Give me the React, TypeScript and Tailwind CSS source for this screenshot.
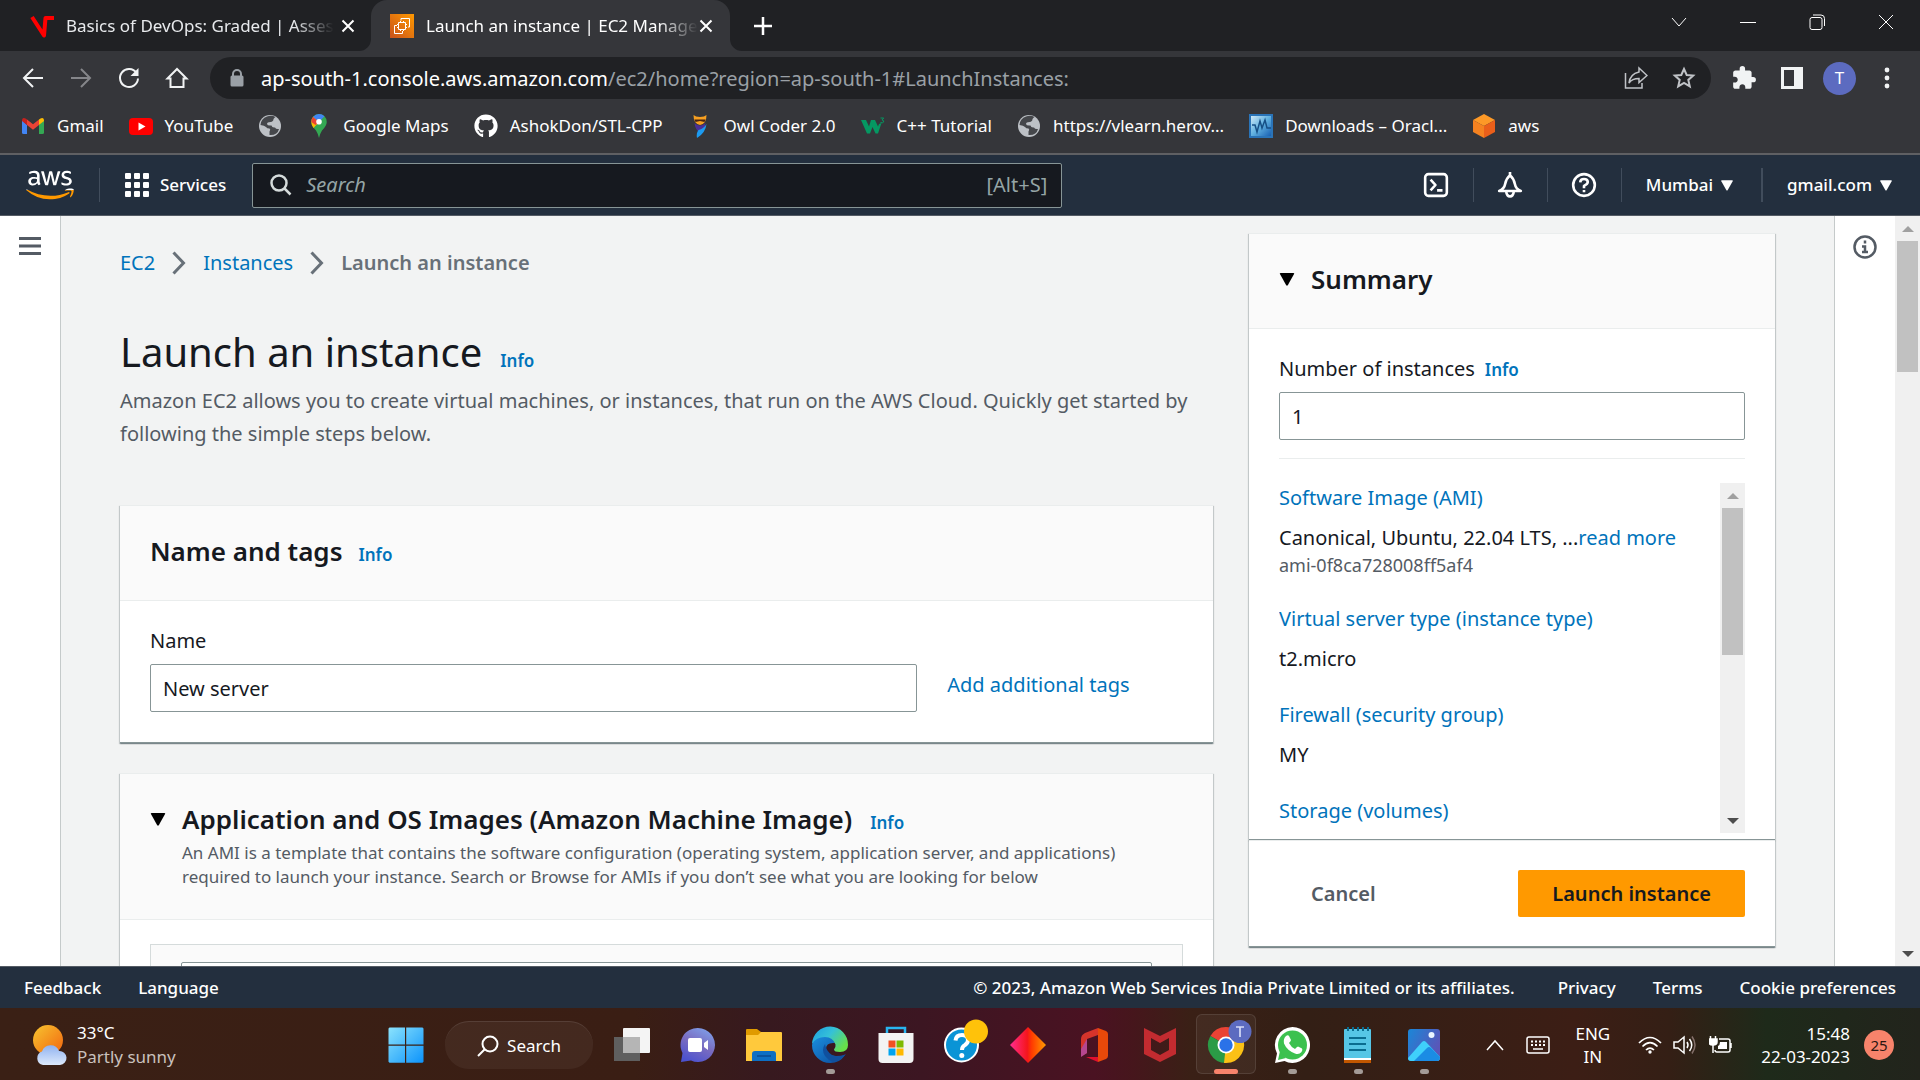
import React from "react";
import type { ReactNode } from "react";
import { FaAws, FaGithub } from "react-icons/fa";
import { MdExtension } from "react-icons/md";

/* ---------- small shared pieces ---------- */

function Info() {
  return (
    <a href="#info" className="text-[17px] leading-6 font-semibold text-[#0073bb]">
      Info
    </a>
  );
}

function Caret({ className }: { className: string }) {
  return (
    <svg viewBox="0 0 16 14" className={className} fill="currentColor" aria-hidden="true">
      <path d="M1 0h14q1.200 0 .6 1.200L9 13q-1 1.500-2 0L.4 1.200Q-.2 0 1 0z" />
    </svg>
  );
}

function CloseX() {
  return (
    <svg viewBox="0 0 14 14" className="size-[14px]" stroke="#fff" strokeWidth="2" aria-hidden="true">
      <path d="M1.500 1.500l11 11M12.500 1.500l-11 11" />
    </svg>
  );
}

function ScrollArrow({ up = false }: { up?: boolean }) {
  return (
    <svg viewBox="0 0 12 6" className={up ? "h-[6px] w-3 text-[#a0a0a0]" : "h-[6px] w-3 text-[#4d4d4d]"} fill="currentColor" aria-hidden="true">
      <path d={up ? "M0 6L6 0l6 6z" : "M0 0l6 6 6-6z"} />
    </svg>
  );
}

function Scrollbar({ thumb }: { thumb: string }) {
  return (
    <div className="flex w-[25px] shrink-0 flex-col items-center bg-[#f0f0f0]">
      <div className="flex h-[25px] items-center">
        <ScrollArrow up />
      </div>
      <div className={thumb} />
      <div className="mt-auto flex h-[25px] items-center">
        <ScrollArrow />
      </div>
    </div>
  );
}

/* ---------- browser chrome ---------- */

function Tab({ icon, title, active = false }: { icon: ReactNode; title: string; active?: boolean }) {
  return (
    <div
      className={
        active
          ? "relative flex w-[359px] items-center rounded-t-2xl bg-[#35363a] pr-[17px] pl-[19px] text-white"
          : "flex w-[371px] items-center pr-4 pl-[30px] text-[#e8eaed]"
      }
    >
      {active && (
        <>
          <svg viewBox="0 0 12 12" className="absolute bottom-0 -left-3 size-3" fill="#35363a" aria-hidden="true">
            <path d="M12 0v12H0A12 12 0 0 0 12 0z" />
          </svg>
          <svg viewBox="0 0 12 12" className="absolute -right-3 bottom-0 size-3" fill="#35363a" aria-hidden="true">
            <path d="M0 0v12h12A12 12 0 0 1 0 0z" />
          </svg>
        </>
      )}
      {icon}
      <span className="ml-3 mask-r-from-85% text-[17px] leading-6 whitespace-nowrap">{title}</span>
      <button aria-label="Close tab" className="ml-auto">
        <CloseX />
      </button>
    </div>
  );
}

function TabStrip() {
  return (
    <div className="flex h-[51px] bg-[#202124]">
      <Tab
        title="Basics of DevOps: Graded | Asses"
        icon={
          <svg viewBox="0 0 24 24" className="size-6 shrink-0" fill="none" stroke="#f00" strokeWidth="4" aria-hidden="true">
            <path d="M2 3l12 18.500L15.500 4H24" strokeLinejoin="round" />
          </svg>
        }
      />
      <Tab
        active
        title="Launch an instance | EC2 Manage"
        icon={
          <svg viewBox="0 0 24 24" className="size-6 shrink-0" aria-hidden="true">
            <defs>
              <linearGradient id="ec2" x1="0" y1="1" x2="1" y2="0">
                <stop offset="0" stopColor="#c8511b" />
                <stop offset="1" stopColor="#f90" />
              </linearGradient>
            </defs>
            <path fill="url(#ec2)" d="M0 0h24v24H0z" />
            <g fill="none" stroke="#fff" strokeWidth="1">
              <path d="M7 11.500H4.500v8h8V17M11 6.500v-2h8.500v8.500H18" />
              <path d="M8.500 8.500h7v7h-7zM10.500 7v1.500m3-1.500v1.500m-3 7V17m3-1.500V17M7 10.500h1.500M7 13.500h1.500m7-3H17m-1.500 3H17" />
            </g>
          </svg>
        }
      />
      <button aria-label="New tab" className="ml-6">
        <svg viewBox="0 0 18 18" className="size-[18px]" stroke="#fff" strokeWidth="2.500" aria-hidden="true">
          <path d="M9 0v18M0 9h18" />
        </svg>
      </button>
      <div className="ml-auto flex h-[43px]">
        {[
          ["Search tabs", "M1 4l7 8 7-8"],
          ["Minimise", "M0 8.500h16"],
          ["Restore", "M3 3.500h8q2 0 2 2v8q0 2-2 2H3q-2 0-2-2v-8q0-2 2-2zM4 1h8q3.500 0 3.500 3.500V12"],
          ["Close", "M1 1l14 14M15 1L1 15"],
        ].map(([label, d]) => (
          <button key={label} aria-label={label} className="flex w-[69px] items-center justify-center">
            <svg viewBox="0 0 16 16" className="size-4" fill="none" stroke="#fff" strokeWidth="1" aria-hidden="true">
              <path d={d} />
            </svg>
          </button>
        ))}
      </div>
    </div>
  );
}

function NavButton({ label, children }: { label: string; children: ReactNode }) {
  return (
    <button aria-label={label} className="flex w-12 shrink-0 justify-center">
      <svg viewBox="0 0 24 24" className="size-6" fill="none" stroke="#f1f3f4" strokeWidth="2" aria-hidden="true">
        {children}
      </svg>
    </button>
  );
}

function Toolbar() {
  return (
    <div className="flex h-[54px] items-center bg-[#35363a] pr-[9px] pl-[9px]">
      <NavButton label="Back">
        <path d="M22 12H3M12 3l-9 9 9 9" />
      </NavButton>
      <NavButton label="Forward">
        <path stroke="#85868a" d="M2 12h19M12 3l9 9-9 9" />
      </NavButton>
      <NavButton label="Reload">
        <path d="M19.500 7A9 9 0 1 0 21 12.500" />
        <path d="M21.500 2v8h-8z" fill="#f1f3f4" stroke="none" />
      </NavButton>
      <NavButton label="Home">
        <path d="M2.500 12.500L12 3l9.500 9.500H18.500V21h-13v-8.500z" />
      </NavButton>
      <div className="ml-[9px] flex h-[42px] flex-1 items-center rounded-full bg-[#202124] pr-[3px]">
        <svg viewBox="0 0 14 18" className="mr-[17px] ml-5 h-[18px] w-[14px] shrink-0" aria-hidden="true">
          <path d="M3 8V5a4 4 0 0 1 8 0v3" fill="none" stroke="#9aa0a6" strokeWidth="2" />
          <rect x="0.500" y="6.500" width="13" height="11" rx="1.500" fill="#9aa0a6" />
        </svg>
        <p className="flex-1 pt-px text-[20px] leading-7 text-[#9aa0a6]">
          <span className="text-white">ap-south-1.console.aws.amazon.com</span>/ec2/home?region=ap-south-1#LaunchInstances:
        </p>
        <button aria-label="Share" className="flex w-12 justify-center">
          <svg viewBox="0 0 24 24" className="size-6" fill="none" stroke="#c0c3c7" strokeWidth="1.500" aria-hidden="true">
            <path d="M1.500 7v15H18v-5" />
            <path d="M15 2l8 7.500-8 7v-4q-7 0-10 4.500 1-9 10-11z" />
          </svg>
        </button>
        <button aria-label="Bookmark this tab" className="flex w-12 justify-center">
          <svg viewBox="0 0 24 24" className="size-6" fill="none" stroke="#c0c3c7" strokeWidth="2" aria-hidden="true">
            <path d="M12 3l2.700 6 6.500.6-4.900 4.300 1.500 6.500L12 17l-5.800 3.400 1.500-6.500-4.900-4.300 6.500-.6z" />
          </svg>
        </button>
      </div>
      <button aria-label="Extensions" className="ml-[9px] flex w-12 justify-center">
        <MdExtension className="size-[26px] text-[#f1f3f4]" />
      </button>
      <NavButton label="Side panel">
        <path d="M2.500 2.500h19v19h-19z" strokeWidth="3" />
        <path d="M14 2h8v20h-8z" fill="#f1f3f4" stroke="none" />
      </NavButton>
      <button aria-label="Profile" className="mx-[7px] flex size-[33px] items-center justify-center rounded-full bg-[#5c6bc0] text-[17px] leading-6 text-white">
        T
      </button>
      <NavButton label="Menu">
        <g fill="#f1f3f4" stroke="none">
          <circle cx="12" cy="4" r="2.400" />
          <circle cx="12" cy="12" r="2.400" />
          <circle cx="12" cy="20" r="2.400" />
        </g>
      </NavButton>
    </div>
  );
}

function Svg24({ children }: { children: ReactNode }) {
  return (
    <svg viewBox="0 0 24 24" className="size-6 shrink-0" aria-hidden="true">
      {children}
    </svg>
  );
}

const globe = (
  <Svg24>
    <circle cx="12" cy="12" r="11" fill="#bdc1c6" />
    <path d="M9 2.500q-6 2-6.500 8.500 4 .5 5.500 2 1 1.500 3.500 1.500 1.500 1 0 3v3.500q8 .5 9.500-6-3 .5-4-1.500-3 .5-3.500-2-4 .5-4.500-1.500 0-2 3.500-2 3-.5 3-3 1-1.500 2-2-4-2-8.500-.5z" fill="#45474b" />
  </Svg24>
);

const bookmarks: { label: string; icon: ReactNode }[] = [
  {
    label: "Gmail",
    icon: (
      <Svg24>
        <path d="M1 6v12.500q0 1.500 1.500 1.500H6V11z" fill="#4285f4" />
        <path d="M23 6v12.500q0 1.500-1.500 1.500H18V11z" fill="#34a853" />
        <path d="M18 11V5.500l1.500-1Q23 3 23 7z" fill="#fbbc04" />
        <path d="M6 11V5.500l-1.500-1Q1 3 1 7z" fill="#c5221f" />
        <path d="M6 5.500l6 4.700 6-4.700V11l-6 4.700L6 11z" fill="#ea4335" />
      </Svg24>
    ),
  },
  {
    label: "YouTube",
    icon: (
      <Svg24>
        <rect y="4" width="24" height="17" rx="4" fill="#f00" />
        <path d="M9.500 8.500v8l7-4z" fill="#fff" />
      </Svg24>
    ),
  },
  { label: "", icon: globe },
  {
    label: "Google Maps",
    icon: (
      <Svg24>
        <path d="M12 24q-.8-4-3-7.500-5-5-4.700-8.700A7.700 7.700 0 0 1 12 0a7.700 7.700 0 0 1 7.700 7.800q.3 3.700-4.700 8.700-2.200 3.500-3 7.500z" fill="#34a853" />
        <path d="M4.300 8A7.700 7.700 0 0 1 6.500 2.500L12 8l-5.500 6Q4.300 11 4.300 8z" fill="#fbbc04" />
        <path d="M6 3Q8.500 0 12 0q3 0 5.500 2.300L12 8z" fill="#4285f4" />
        <path d="M4.300 8Q4.300 5 6 3l6 5-3.500 3z" fill="#ea4335" />
        <circle cx="12" cy="7.800" r="2.800" fill="#fff" />
      </Svg24>
    ),
  },
  { label: "AshokDon/STL-CPP", icon: <FaGithub className="size-6 shrink-0 text-white" /> },
  {
    label: "Owl Coder 2.0",
    icon: (
      <Svg24>
        <path d="M5.500 1q2 2 6.500 2t6.500-2q0 9-6.500 10Q5.500 10 5.500 1z" fill="#f6a021" />
        <path d="M6.500 5.500h11l-1 2.500-4.500-1L7.500 8z" fill="#4a2410" />
        <path d="M6.500 9q5.500 5 11 0-.5 6-5 10-5.500-3-6-10z" fill="#4a2f96" />
        <path d="M18.500 10q-1 9-9.500 14-1-5 1.500-8 5-1 8-6z" fill="#1c9bf0" />
      </Svg24>
    ),
  },
  {
    label: "C++ Tutorial",
    icon: (
      <Svg24>
        <path d="M0 6h5l3 6.500L10 6h4l3 6.500L18 10l2.500-1-3.500 10.500h-2.500L11.500 13 9 19.500H6z" fill="#059862" />
        <path d="M19.500 4h3.200l-1.700 2q2 .2 1.700 2-1 1.300-3.200.5" fill="none" stroke="#059862" strokeWidth="1" />
      </Svg24>
    ),
  },
  { label: "https://vlearn.herov...", icon: globe },
  {
    label: "Downloads – Oracl...",
    icon: (
      <Svg24>
        <defs>
          <linearGradient id="dl" x1="0" y1="0" x2="1" y2="1">
            <stop offset="0" stopColor="#e6f4fb" />
            <stop offset="0.500" stopColor="#5fb0e0" />
            <stop offset="1" stopColor="#0a4fa8" />
          </linearGradient>
        </defs>
        <path d="M0 0h24v24H0z" fill="url(#dl)" />
        <path d="M1 1h22v22H1z" fill="none" stroke="#2a74b8" strokeWidth="2" />
        <path d="M3 11h3l2 7 3-11 2 7 3-8 2 8h4" fill="none" stroke="#164f86" strokeWidth="1.500" />
      </Svg24>
    ),
  },
  {
    label: "aws",
    icon: (
      <Svg24>
        <path d="M12 0l11 6-11 6L1 6z" fill="#fd9927" />
        <path d="M1 6l11 6v12L1 18z" fill="#f58220" />
        <path d="M23 6l-11 6v12l11-6z" fill="#ea5f1a" />
      </Svg24>
    ),
  },
];

function BookmarksBar() {
  return (
    <nav aria-label="Bookmarks" className="flex h-[50px] items-center gap-[25px] border-b-2 border-[#5f6063] bg-[#35363a] pb-[6px] pl-[21px] whitespace-nowrap">
      {bookmarks.map((b, i) => (
        <a key={i} href="#bookmark" aria-label={b.label || "Bookmark"} className="flex items-center gap-3 text-[17px] leading-6 text-white">
          {b.icon}
          {b.label && <span>{b.label}</span>}
        </a>
      ))}
    </nav>
  );
}

/* ---------- AWS console ---------- */

function HeaderIcon({ label, children }: { label: string; children: ReactNode }) {
  return (
    <button aria-label={label} className="flex h-[34px] w-[74px] items-center justify-center border-r border-[#414d5c]">
      <svg viewBox="0 0 24 24" className="size-[26px]" fill="none" stroke="#fff" strokeWidth="2.400" strokeLinejoin="round" aria-hidden="true">
        {children}
      </svg>
    </button>
  );
}

function ConsoleHeader() {
  return (
    <header className="flex h-[61px] items-center border-b border-[#545b64] bg-[#232f3e] text-[17px] font-medium text-white">
      <a href="#home" aria-label="AWS" className="flex h-[34px] w-[100px] items-center justify-center border-r border-[#414d5c]">
        <svg width="0" height="0" aria-hidden="true">
          <defs>
            <linearGradient id="awsFill" gradientUnits="userSpaceOnUse" x1="0" y1="0" x2="0" y2="512">
              <stop offset="0.630" stopColor="#fff" />
              <stop offset="0.630" stopColor="#f90" />
            </linearGradient>
          </defs>
        </svg>
        <FaAws className="h-[38px] w-12" fill="url(#awsFill)" />
      </a>
      <button className="ml-[25px] flex items-center gap-[11px] leading-6">
        <svg viewBox="0 0 24 24" className="size-6" fill="#fff" aria-hidden="true">
          {[0, 9, 18].map((y) => [0, 9, 18].map((x) => <rect key={`${x}-${y}`} x={x} y={y} width="6" height="6" rx="1" />))}
        </svg>
        Services
      </button>
      <label className="ml-[26px] flex h-[45px] w-[810px] items-center rounded-xs border border-[#879596] bg-[#16191f] pr-[14px] pl-[17px] text-[20px] font-normal text-[#95a5a6]">
        <svg viewBox="0 0 22 22" className="size-[22px] shrink-0" fill="none" stroke="#d5dbdb" strokeWidth="2.500" aria-hidden="true">
          <circle cx="9" cy="9" r="7.500" />
          <path d="M14.500 14.500l6 6" />
        </svg>
        <input aria-label="Search" placeholder="Search" className="ml-[14px] min-w-0 flex-1 bg-transparent leading-7 placeholder:text-[#95a5a6] placeholder:italic" />
        <span>[Alt+S]</span>
      </label>
      <div className="ml-auto flex items-center">
        <HeaderIcon label="CloudShell">
          <rect x="2" y="2" width="20" height="20" rx="3" />
          <path d="M7 7l4.500 5L7 17M13 17h5" />
        </HeaderIcon>
        <HeaderIcon label="Notifications">
          <path d="M12 0v4M12 3q3.500 3 4.500 8 .8 4.500 5.500 6.500H2Q6.700 15.500 7.500 11 8.500 6 12 3zM8.500 18q.5 4.500 3.500 4.500t3.500-4.500" />
        </HeaderIcon>
        <HeaderIcon label="Help">
          <circle cx="12" cy="12" r="10" />
          <path d="M8.500 9.500Q8.700 6.500 12 6.500t3.500 2.700Q15.500 11 12 12.800V15M12 16.500v2.300" />
        </HeaderIcon>
        <button className="flex h-[34px] items-center gap-2 border-r-2 border-[#414d5c] pr-7 pl-6">
          Mumbai <Caret className="h-[11px] w-3" />
        </button>
        <button className="flex items-center gap-2 pr-7 pl-6">
          gmail.com <Caret className="h-[11px] w-3" />
        </button>
      </div>
    </header>
  );
}

function Chevron() {
  return (
    <svg viewBox="0 0 14 24" className="h-6 w-[14px]" fill="none" stroke="#687078" strokeWidth="3" aria-hidden="true">
      <path d="M1.500 1.500L11.500 12l-10 10.500" />
    </svg>
  );
}

const cardShadow = "shadow-[0_1px_1px_0_rgba(0,28,36,0.3),1px_1px_1px_0_rgba(0,28,36,0.15),-1px_1px_1px_0_rgba(0,28,36,0.15)] border-t border-b border-t-[#eaeded] border-b-[#879596] bg-white";
const field = "block h-12 w-full rounded-xs border border-[#879596] bg-white px-3 text-[20px] leading-7 text-[#16191f]";
const linkStyle = "text-[20px] leading-6 text-[#0073bb]";

function MainColumn() {
  return (
    <main className="min-w-0 flex-1 pt-[35px]">
      <nav aria-label="Breadcrumb" className="flex items-center gap-[17px] text-[20px] leading-6">
        <a href="#ec2" className="text-[#0073bb]">EC2</a>
        <Chevron />
        <a href="#instances" className="text-[#0073bb]">Instances</a>
        <Chevron />
        <span className="font-semibold text-[#687078]">Launch an instance</span>
      </nav>
      <div className="mt-[53px] flex items-baseline gap-[18px]">
        <h1 className="text-[40px] leading-[48px] text-[#16191f]">Launch an instance</h1>
        <Info />
      </div>
      <p className="mt-2 text-[20px] leading-[33px] text-[#545b64]">
        Amazon EC2 allows you to create virtual machines, or instances, that run on the AWS Cloud. Quickly get started by following the simple steps below.
      </p>

      <section className={`mt-[55px] ${cardShadow}`}>
        <div className="flex items-baseline gap-4 border-b border-[#eaeded] bg-[#fafafa] px-[30px] pt-7 pb-8">
          <h2 className="text-[26px] leading-[34px] font-semibold text-[#16191f]">Name and tags</h2>
          <Info />
        </div>
        <div className="grid grid-cols-4 items-end gap-[30px] px-[30px] pt-7 pb-[30px]">
          <div className="col-span-3">
            <label htmlFor="name" className="block text-[20px] leading-6 text-[#16191f]">Name</label>
            <input id="name" defaultValue="New server" className={`mt-[11px] ${field}`} />
          </div>
          <a href="#tags" className={`pb-[15px] whitespace-nowrap ${linkStyle}`}>Add additional tags</a>
        </div>
      </section>

      <section className={`mt-[30px] ${cardShadow}`}>
        <div className="flex items-start gap-4 border-b border-[#eaeded] bg-[#fafafa] px-[30px] pt-7 pb-[30px]">
          <button aria-label="Collapse" className="mt-[11px]">
            <Caret className="h-[13px] w-4" />
          </button>
          <div>
            <div className="flex items-baseline gap-[18px]">
              <h2 className="text-[26px] leading-[34px] font-semibold text-[#16191f]">Application and OS Images (Amazon Machine Image)</h2>
              <Info />
            </div>
            <p className="mt-[5px] pr-6 text-[17px] leading-6 text-[#545b64]">
              An AMI is a template that contains the software configuration (operating system, application server, and applications) required to launch your instance. Search or Browse for AMIs if you don’t see what you are looking for below
            </p>
          </div>
        </div>
        <div className="px-[30px] pt-6">
          <div className="border border-[#d5dbdb] bg-[#fafafa] px-[30px] pt-[17px]">
            <input aria-label="Search AMIs" className={field} />
          </div>
        </div>
      </section>
    </main>
  );
}

function SummaryItem({ label, children }: { label: string; children?: ReactNode }) {
  return (
    <div>
      <a href="#item" className={linkStyle}>{label}</a>
      {children && <div className="mt-[15px] text-[20px] leading-6 text-[#16191f]">{children}</div>}
    </div>
  );
}

function SummaryPanel() {
  return (
    <aside className="w-[526px] shrink-0 pt-[17px]">
      <section className={cardShadow}>
        <div className="flex items-center gap-4 border-b border-[#eaeded] bg-[#fafafa] px-[30px] pt-7 pb-8">
          <button aria-label="Collapse">
            <Caret className="h-[13px] w-4" />
          </button>
          <h2 className="text-[26px] leading-[34px] font-semibold text-[#16191f]">Summary</h2>
        </div>
        <div className="px-[30px] pt-7 pb-[6px]">
          <div className="flex items-baseline gap-[10px]">
            <label htmlFor="count" className="text-[20px] leading-6 text-[#16191f]">Number of instances</label>
            <Info />
          </div>
          <input id="count" defaultValue="1" className={`mt-[10px] ${field}`} />
          <div className="mt-[18px] border-t border-[#eaeded]" />
          <div className="mt-6 flex h-[350px]">
            <div className="flex flex-1 flex-col gap-8 overflow-hidden pt-[3px]">
              <SummaryItem label="Software Image (AMI)">
                Canonical, Ubuntu, 22.04 LTS, ...<a href="#more" className="text-[#0073bb]">read more</a>
                <p className="mt-[5px] text-[18px] leading-5 text-[#545b64]">ami-0f8ca728008ff5af4</p>
              </SummaryItem>
              <SummaryItem label="Virtual server type (instance type)">t2.micro</SummaryItem>
              <SummaryItem label="Firewall (security group)">MY</SummaryItem>
              <SummaryItem label="Storage (volumes)" />
            </div>
            <Scrollbar thumb="h-[147px] w-[21px] bg-[#c1c1c1]" />
          </div>
        </div>
      </section>
      <div className={`flex items-center justify-between pt-[29px] pr-[30px] pb-[29px] pl-[62px] text-[20px] leading-6 font-semibold ${cardShadow}`}>
        <button className="text-[#545b64]">Cancel</button>
        <button className="h-[47px] rounded-xs bg-[#f90] px-[34px] text-[#16191f]">Launch instance</button>
      </div>
    </aside>
  );
}

function ConsoleFooter() {
  return (
    <footer className="flex h-[42px] shrink-0 items-center gap-[37px] border-t border-[#545b64] bg-[#232f3e] px-6 text-[17px] leading-6 font-medium whitespace-nowrap text-white">
      <a href="#feedback">Feedback</a>
      <a href="#language">Language</a>
      <p className="mr-[6px] ml-auto">© 2023, Amazon Web Services India Private Limited or its affiliates.</p>
      <a href="#privacy">Privacy</a>
      <a href="#terms">Terms</a>
      <a href="#cookies">Cookie preferences</a>
    </footer>
  );
}

/* ---------- taskbar ---------- */

function AppIcon({ label, children, running = false, active = false }: { label: string; children: ReactNode; running?: boolean; active?: boolean }) {
  return (
    <button aria-label={label} className="relative flex h-[72px] w-[66px] items-center justify-center pt-[2px]">
      {active && <span className="absolute inset-x-[3px] inset-y-[6px] rounded-md border border-white/10 bg-white/5" />}
      <svg viewBox="0 0 36 36" className="relative size-9 overflow-visible" aria-hidden="true">
        {children}
      </svg>
      {running && <span className="absolute bottom-[6px] h-[5px] w-[9px] rounded-full bg-[#a39b97]" />}
      {active && <span className="absolute bottom-[6px] h-[5px] w-6 rounded-full bg-[#f7836b]" />}
    </button>
  );
}

function Taskbar() {
  return (
    <div className="flex h-[72px] shrink-0 items-center bg-[linear-gradient(90deg,#3a2015_0%,#3a1e14_33%,#37191f_40%,#3c1622_48%,#4a1222_57%,#46161c_59%,#3a2016_62%,#331f15_68%,#3c1e15_82%,#341f15_87%,#1e2a1a_92%,#22241c_100%)] text-[17px] text-white">
      <button className="flex w-[373px] items-center gap-[10px] pt-[2px] pl-[31px] text-left leading-6">
        <svg viewBox="0 0 36 42" className="h-[42px] w-9" aria-hidden="true">
          <defs>
            <linearGradient id="sun" x1="0" y1="0" x2="1" y2="1">
              <stop offset="0" stopColor="#f7c52f" />
              <stop offset="1" stopColor="#f2640f" />
            </linearGradient>
            <linearGradient id="cloud" x1="0" y1="0" x2="0" y2="1">
              <stop offset="0" stopColor="#8fb2f0" />
              <stop offset="1" stopColor="#dde9fb" />
            </linearGradient>
          </defs>
          <circle cx="17" cy="16" r="15" fill="url(#sun)" />
          <path d="M12 41a7 7 0 0 1-1-13.500 9 9 0 0 1 17-.5 7 7 0 0 1 1 14z" fill="url(#cloud)" />
        </svg>
        <span>
          33°C
          <span className="block text-[#c9c1bd]">Partly sunny</span>
        </span>
      </button>
      <AppIcon label="Start">
        <defs>
          <linearGradient id="win" x1="0" y1="0" x2="1" y2="1">
            <stop offset="0" stopColor="#8be3fd" />
            <stop offset="1" stopColor="#0c93fb" />
          </linearGradient>
        </defs>
        <path fill="url(#win)" d="M1.500 .5H17v17H.5V1.500zM18.200.5H34.500l1 1v16H18.200zM.5 18.700H17v17H1.500l-1-1zM18.200 18.700h17.300v16l-1 1H18.200z" />
      </AppIcon>
      <button className="mx-[6px] mt-[2px] flex h-12 w-[148px] items-center justify-center gap-2 rounded-full border-t border-white/10 bg-white/5 leading-6">
        <svg viewBox="0 0 22 22" className="size-[22px]" fill="none" stroke="#fff" strokeWidth="2" aria-hidden="true">
          <circle cx="13" cy="9" r="7.500" />
          <path d="M7.500 14.500L1 21" />
        </svg>
        Search
      </button>
      <AppIcon label="Task view">
        <path d="M0 10h26v24H0z" fill="#5f5f5f" />
        <rect x="9" y="1" width="27" height="25" rx="1" fill="#f4f4f4" />
        <path d="M9 10h17v16H9z" fill="#b5b5b5" />
      </AppIcon>
      <AppIcon label="Chat">
        <defs>
          <linearGradient id="chat" x1="0.800" y1="0" x2="0.300" y2="1">
            <stop offset="0" stopColor="#7ea0ea" />
            <stop offset="0.500" stopColor="#7a6cc0" />
            <stop offset="1" stopColor="#4c52cf" />
          </linearGradient>
        </defs>
        <path d="M18 1a17 17 0 1 1-7 32.500L1 35l1.500-9A17 17 0 0 1 18 1z" fill="url(#chat)" />
        <rect x="8" y="11" width="14" height="14" rx="2" fill="#fff" />
        <path d="M24 16l4-3v10l-4-3z" fill="#fff" />
      </AppIcon>
      <AppIcon label="File Explorer">
        <path d="M0 3q0-1 1-1h10l4 3v6H0z" fill="#e09b00" />
        <path d="M0 8h12l3-3h20q1 0 1 1v28H0z" fill="#ffc93c" />
        <path d="M6 34v-7q0-3 3-3h18q3 0 3 3v7z" fill="#0d6fc4" />
        <path d="M11 29h14" stroke="#0a4a90" strokeWidth="1.500" />
      </AppIcon>
      <AppIcon label="Edge" running>
        <defs>
          <linearGradient id="edgeA" x1="0" y1="0" x2="1" y2="0.600">
            <stop offset="0" stopColor="#1b9de2" />
            <stop offset="0.500" stopColor="#35c1d8" />
            <stop offset="1" stopColor="#67e04a" />
          </linearGradient>
          <linearGradient id="edgeB" x1="0" y1="0" x2="1" y2="1">
            <stop offset="0" stopColor="#1a8fe0" />
            <stop offset="1" stopColor="#0c4a9a" />
          </linearGradient>
        </defs>
        <path d="M0 18Q1 9 12 9q9 0 11 7-9-1-9 6 1 7 10 7 6 0 9-1-5 8-15 8A18 18 0 0 1 0 18z" fill="url(#edgeB)" />
        <path d="M0 17A18 18 0 0 1 36 18q0 7-8 7-6 0-6-2.500 2-2 1.500-5Q21 10 13 10 4 10 0 17z" fill="url(#edgeA)" />
        <path d="M13 17q-4 6 0 12 3 4 8 6 8-1 13-8-7 4-14 1-6-4-7-11z" fill="#10509e" />
      </AppIcon>
      <AppIcon label="Store">
        <path d="M9 8V1h18v7" fill="none" stroke="#28b5f0" strokeWidth="2.500" />
        <path d="M0.500 6h35v26q0 4-4 4h-27q-4 0-4-4z" fill="#f3f3f3" />
        <path d="M10.500 13.500h7v7h-7z" fill="#f25022" />
        <path d="M18.500 13.500h7v7h-7z" fill="#7fba00" />
        <path d="M10.500 21.500h7v7h-7z" fill="#00a4ef" />
        <path d="M18.500 21.500h7v7h-7z" fill="#ffb900" />
      </AppIcon>
      <AppIcon label="Get Help">
        <circle cx="17.500" cy="18" r="16.500" fill="#0a94d6" stroke="#fff" strokeWidth="2" />
        <path d="M11.500 13.500q.5-5.500 6.500-5.500 6 0 6 5 0 3-3 5-3 1.500-3 5" fill="none" stroke="#fff" strokeWidth="4" />
        <circle cx="17.800" cy="28.500" r="2.500" fill="#fff" />
        <circle cx="32" cy="4.500" r="12" fill="#ffc20a" />
      </AppIcon>
      <AppIcon label="Diamond app">
        <defs>
          <linearGradient id="dia">
            <stop offset="0" stopColor="#ff2d8f" />
            <stop offset="0.480" stopColor="#f5151c" />
            <stop offset="0.600" stopColor="#ff3a00" />
            <stop offset="1" stopColor="#ff9c00" />
          </linearGradient>
        </defs>
        <path d="M18 0l18 18-18 18L0 18z" fill="url(#dia)" />
      </AppIcon>
      <AppIcon label="Office">
        <path d="M22 1l-13 5q-4 2-4 6v17l6-3V12l11-4z" fill="#d6342b" />
        <path d="M5 22v8l6-4V12z" fill="#b5478f" />
        <path d="M22 1l8 3q2 1 2 3v22q0 2-2 3l-8 3z" fill="#e8490a" />
        <path d="M10 30h12v5z" fill="#e0102e" />
      </AppIcon>
      <AppIcon label="McAfee">
        <path d="M2 1l16 8 16-8v26l-16 8-16-8zM9 11v12l9 5 9-5V11l-9 5z" fill="#c32b30" fillRule="evenodd" />
      </AppIcon>
      <AppIcon label="Chrome" active>
        <path d="M18 18L2.400 9A18 18 0 0 1 33.600 9z" fill="#ea4335" />
        <path d="M18 18V36A18 18 0 0 1 2.400 9z" fill="#2b9b46" />
        <path d="M18 18l15.600-9A18 18 0 0 1 18 36l-2 0z" fill="#fbc116" />
        <circle cx="18" cy="18" r="8.500" fill="#fff" />
        <circle cx="18" cy="18" r="6.700" fill="#2a72e8" />
        <circle cx="32" cy="4.500" r="11.500" fill="#5c6bc0" />
        <path d="M28 0h8M32 0v10" stroke="#d5dcf7" strokeWidth="1.700" />
      </AppIcon>
      <AppIcon label="WhatsApp" running>
        <path d="M18.500 0a17.500 18 0 1 1-8 34L1 36l2-9.500A18 18 0 0 1 18.500 0z" fill="#fff" />
        <circle cx="18.500" cy="18" r="14.500" fill="#3cc14f" />
        <path d="M4 33l2-9 6 7z" fill="#3cc14f" />
        <path d="M12 9q2-1.500 3 0l2 4q0 1-2 3 2 4 6 6 2-2.500 3-2.500l4 2q1 1-.5 3.500-2.500 3-6.500 1.500-8-3-11-10-1-5 2-7.500z" fill="#fff" />
      </AppIcon>
      <AppIcon label="Notepad" running>
        <rect x="4" y="2" width="27" height="34" rx="1" fill="#56c6e6" />
        <path d="M4 31h27v2H4z" fill="#fff" />
        <path d="M4 33h27v3H4z" fill="#c25700" />
        <path d="M9 11h17M9 17h17M9 23h17" stroke="#0a6d90" strokeWidth="2" />
        <path d="M8 0v4m5-4v4m5-4v4m5-4v4m5-4v4" stroke="#0a6d90" strokeWidth="2" />
      </AppIcon>
      <AppIcon label="Photos" running>
        <defs>
          <linearGradient id="photo" x1="0" y1="0" x2="1" y2="0.500">
            <stop offset="0" stopColor="#1a87d8" />
            <stop offset="1" stopColor="#5b55b8" />
          </linearGradient>
        </defs>
        <rect x="2" y="2" width="32" height="32" rx="3" fill="url(#photo)" />
        <path d="M2 31l14-16q2-2 4 0l14 15q0 4-3 4H5q-3 0-3-3z" fill="#3fd0fb" />
        <path d="M8 34l13-13q2-2 4 0l9 9q0 4-3 4z" fill="#1b8ce4" />
        <circle cx="25.500" cy="8" r="3" fill="#eaf6ff" />
      </AppIcon>

      <div className="mr-[26px] ml-auto flex items-center pt-[1px]">
        <button aria-label="Hidden icons" className="mr-[22px]">
          <svg viewBox="0 0 18 12" className="h-3 w-[18px]" fill="none" stroke="#fff" strokeWidth="1.500" aria-hidden="true">
            <path d="M1 11l8-9 8 9" />
          </svg>
        </button>
        <button aria-label="Touch keyboard" className="mr-[26px]">
          <svg viewBox="0 0 24 18" className="h-[18px] w-6" fill="none" stroke="#fff" strokeWidth="1.500" aria-hidden="true">
            <rect x="1" y="1" width="22" height="16" rx="2" />
            <path d="M5 5.500h14M5 9h14" strokeDasharray="2 2" strokeWidth="2" />
            <path d="M7 13h10" />
          </svg>
        </button>
        <button className="mr-7 text-center leading-[23px]">
          ENG
          <br />
          IN
        </button>
        <svg viewBox="0 0 24 18" className="mr-[11px] h-[18px] w-6" fill="none" stroke="#fff" strokeWidth="1.700" aria-label="Wi-Fi">
          <path d="M1 7q11-11 22 0M4.500 10.500q7.500-7.500 15 0M8 14q4-4 8 0" />
          <circle cx="12" cy="16" r="1.700" fill="#fff" stroke="none" />
        </svg>
        <svg viewBox="0 0 24 20" className="mr-3 h-5 w-6" fill="none" stroke="#fff" strokeWidth="1.500" aria-label="Volume">
          <path d="M1 7h4l6-5v16l-6-5H1zM14 7q2 3 0 6M16.500 4q4.500 6 0 12" />
          <path d="M19 1.500q6 8.500 0 17" stroke="#84706a" />
        </svg>
        <svg viewBox="0 0 24 20" className="mr-7 h-5 w-6" fill="none" stroke="#fff" strokeWidth="1.500" aria-label="Battery charging">
          <path d="M10 4h9q2 0 2 2v9q0 2-2 2H8q-2 0-2-2M22 8v5" />
          <path d="M11 7h7v7H9v-3q2-1 2-4z" fill="#fff" stroke="none" />
          <path d="M0 4h8v3q0 3-4 3T0 7zM1.500 1v3M6.500 1v3" fill="#fff" />
          <path d="M4 9v9" />
        </svg>
        <time className="mr-[14px] text-right leading-[23px]">
          15:48
          <br />
          22-03-2023
        </time>
        <span className="flex size-[30px] items-center justify-center rounded-full bg-[#f7836b] text-[15px] leading-5 text-[#2b1612]">25</span>
      </div>
    </div>
  );
}

export default function App() {
  return (
    <div className="flex h-screen flex-col overflow-hidden font-['Noto_Sans',sans-serif]">
      <TabStrip />
      <Toolbar />
      <BookmarksBar />
      <ConsoleHeader />
      <div className="flex min-h-0 flex-1 overflow-hidden bg-[#f2f3f3]">
        <div className="w-[61px] shrink-0 border-r border-[#c5caca] bg-white pt-[21px] pl-[19px]">
          <button aria-label="Open navigation">
            <svg viewBox="0 0 22 18" className="h-[18px] w-[22px]" stroke="#545b64" strokeWidth="3" aria-hidden="true">
              <path d="M0 1.500h22M0 9h22M0 16.500h22" />
            </svg>
          </button>
        </div>
        <div className="flex min-w-0 flex-1 gap-9 pr-[59px] pl-[59px]">
          <MainColumn />
          <SummaryPanel />
        </div>
        <div className="flex w-[61px] shrink-0 justify-center border-l border-[#c5caca] bg-white pt-[19px]">
          <button aria-label="Open help panel" className="size-6">
            <svg viewBox="0 0 24 24" className="size-6" fill="none" stroke="#545b64" strokeWidth="2.500" aria-hidden="true">
              <circle cx="12" cy="12" r="10.500" />
              <path d="M12 5.500v3M9 11.500h3V17M9 17h6" />
            </svg>
          </button>
        </div>
        <Scrollbar thumb="h-[131px] w-[21px] bg-[#c1c1c1]" />
      </div>
      <ConsoleFooter />
      <Taskbar />
    </div>
  );
}
